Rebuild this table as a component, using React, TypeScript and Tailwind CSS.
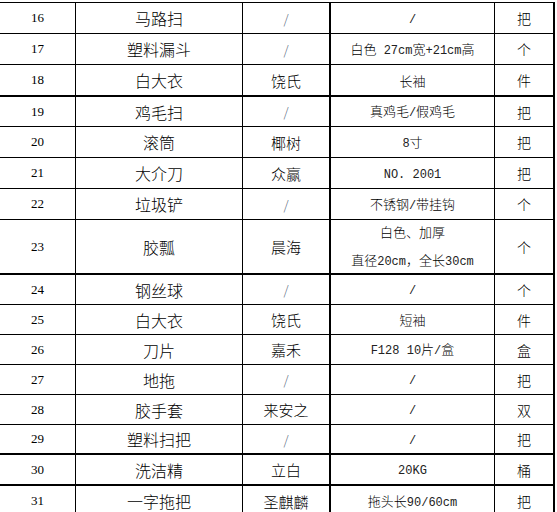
const rows: {
  no: number;
  name: string;
  brand: string;
  spec: string[];
  unit: string;
  h: string;
  thick?: boolean;
}[] = [
  { no: 16, name: "马路扫", brand: "/", spec: ["/"], unit: "把", h: "h-[31px]" },
  { no: 17, name: "塑料漏斗", brand: "/", spec: ["白色 27cm宽+21cm高"], unit: "个", h: "h-[31px]" },
  { no: 18, name: "白大衣", brand: "饶氏", spec: ["长袖"], unit: "件", h: "h-[32px]", thick: true },
  { no: 19, name: "鸡毛扫", brand: "/", spec: ["真鸡毛/假鸡毛"], unit: "把", h: "h-[30px]" },
  { no: 20, name: "滚筒", brand: "椰树", spec: ["8寸"], unit: "把", h: "h-[31px]" },
  { no: 21, name: "大介刀", brand: "众赢", spec: ["NO. 2001"], unit: "把", h: "h-[31px]" },
  { no: 22, name: "垃圾铲", brand: "/", spec: ["不锈钢/带挂钩"], unit: "个", h: "h-[31px]" },
  { no: 23, name: "胶瓢", brand: "晨海", spec: ["白色、加厚", "直径20cm，全长30cm"], unit: "个", h: "h-[55px]", thick: true },
  { no: 24, name: "钢丝球", brand: "/", spec: ["/"], unit: "个", h: "h-[30px]" },
  { no: 25, name: "白大衣", brand: "饶氏", spec: ["短袖"], unit: "件", h: "h-[30px]" },
  { no: 26, name: "刀片", brand: "嘉禾", spec: ["F128 10片/盒"], unit: "盒", h: "h-[30px]" },
  { no: 27, name: "地拖", brand: "/", spec: ["/"], unit: "把", h: "h-[30px]" },
  { no: 28, name: "胶手套", brand: "来安之", spec: ["/"], unit: "双", h: "h-[30px]" },
  { no: 29, name: "塑料扫把", brand: "/", spec: ["/"], unit: "把", h: "h-[30px]", thick: true },
  { no: 30, name: "洗洁精", brand: "立白", spec: ["20KG"], unit: "桶", h: "h-[31px]", thick: true },
  { no: 31, name: "一字拖把", brand: "圣麒麟", spec: ["拖头长90/60cm"], unit: "把", h: "h-[31px]" },
];

const serif = "font-['Liberation_Serif','Noto_Sans_CJK_SC',serif]";
const sans = "font-['Noto_Sans_CJK_SC','Noto_Sans',sans-serif]";

// SimSun-ish look: monospace latin runs, CJK in Noto
function Spec({ text }: { text: string }) {
  const parts = text.split(/([\x00-\x7F]+)/).filter(Boolean);
  return (
    <span className="whitespace-pre">
      {parts.map((p, i) =>
        /^[\x00-\x7F]+$/.test(p) ? (
          <span key={i} className="font-['Liberation_Mono',monospace] text-[12px] text-[#222]">
            {p}
          </span>
        ) : (
          <span key={i} className={`${sans} text-[13px] font-light`}>
            {p}
          </span>
        ),
      )}
    </span>
  );
}

export default function App() {
  return (
    <div className="h-[512px] w-[557px] overflow-hidden bg-white text-black">
      <div className="mt-[2px] w-[555px] border-t border-black">
        {rows.map((r) => (
          <div
            key={r.no}
            className={`flex ${r.h} border-black ${r.thick ? "border-b-2" : "border-b"}`}
          >
            <div className={`flex w-[76px] items-center justify-center border-r border-black text-[13px] ${serif}`}>
              {r.no}
            </div>
            <div className={`flex w-[167px] items-center justify-center border-r border-black text-[16px] font-light leading-none ${sans}`}>
              {r.name}
            </div>
            <div
              className={`flex w-[88px] items-center justify-center border-r-2 border-black font-light leading-none ${sans} ${
                r.brand === "/" ? "text-[13px] text-[#5b6b80]" : "text-[15px]"
              }`}
            >
              {r.brand}
            </div>
            <div className="flex w-[164px] flex-col items-center justify-center gap-[11px] border-r border-black leading-4">
              {r.spec.map((s) => (
                <Spec key={s} text={s} />
              ))}
            </div>
            <div className={`flex w-[60px] items-center justify-center border-r-2 border-black text-[14px] font-light leading-none ${sans}`}>
              {r.unit}
            </div>
          </div>
        ))}
      </div>
    </div>
  );
}
